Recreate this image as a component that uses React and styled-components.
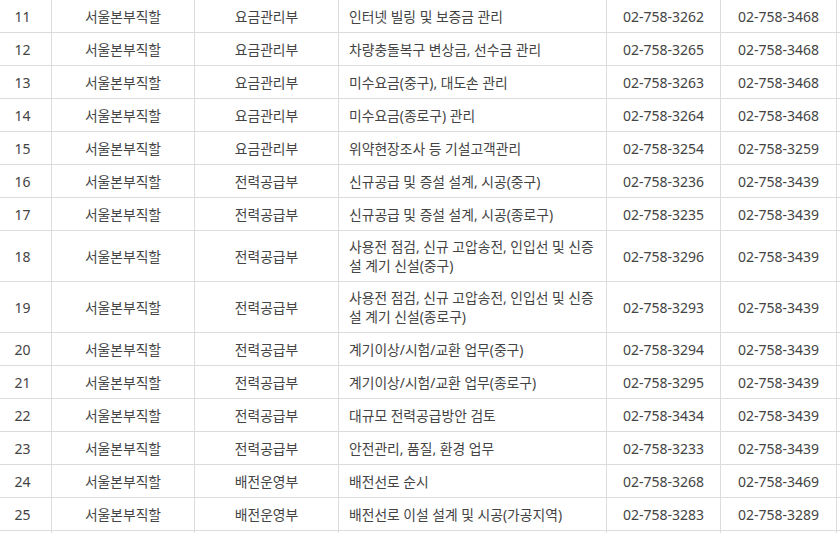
import React from "react";
import styled, { createGlobalStyle } from "styled-components";

const Global = createGlobalStyle`
  html, body { margin: 0; padding: 0; background: #fff; }
  body { overflow: hidden; }
`;

const Viewport = styled.div`
  width: 840px;
  height: 533px;
  overflow: hidden;
  background: #fff;
`;

const Table = styled.table`
  border-collapse: collapse;
  table-layout: fixed;
  width: 943px;
  margin: -1px 0 0 -7px;
  font-family: "Noto Sans", "Noto Sans CJK KR", sans-serif;
  color: #444;
`;

const Cell = styled.td`
  border: 1px solid #dcdcdc;
  height: 20px;
  padding: 6px 10px;
  line-height: 19px;
  font-size: ${(p) => (p.$digits ? "14px" : "13.8px")};
  text-align: ${(p) => (p.$left ? "left" : "center")};
  vertical-align: middle;
  word-break: break-all;
`;

const widths = [58, 143, 144, 268, 114, 116, 100];

const rows = [
  ["11", "요금관리부", "인터넷 빌링 및 보증금 관리", "3262", "3468"],
  ["12", "요금관리부", "차량충돌복구 변상금, 선수금 관리", "3265", "3468"],
  ["13", "요금관리부", "미수요금(중구), 대도손 관리", "3263", "3468"],
  ["14", "요금관리부", "미수요금(종로구) 관리", "3264", "3468"],
  ["15", "요금관리부", "위약현장조사 등 기설고객관리", "3254", "3259"],
  ["16", "전력공급부", "신규공급 및 증설 설계, 시공(중구)", "3236", "3439"],
  ["17", "전력공급부", "신규공급 및 증설 설계, 시공(종로구)", "3235", "3439"],
  ["18", "전력공급부", "사용전 점검, 신규 고압송전, 인입선 및 신증설 계기 신설(중구)", "3296", "3439"],
  ["19", "전력공급부", "사용전 점검, 신규 고압송전, 인입선 및 신증설 계기 신설(종로구)", "3293", "3439"],
  ["20", "전력공급부", "계기이상/시험/교환 업무(중구)", "3294", "3439"],
  ["21", "전력공급부", "계기이상/시험/교환 업무(종로구)", "3295", "3439"],
  ["22", "전력공급부", "대규모 전력공급방안 검토", "3434", "3439"],
  ["23", "전력공급부", "안전관리, 품질, 환경 업무", "3233", "3439"],
  ["24", "배전운영부", "배전선로 순시", "3268", "3469"],
  ["25", "배전운영부", "배전선로 이설 설계 및 시공(가공지역)", "3283", "3289"],
];

export default function App() {
  return (
    <Viewport>
      <Global />
      <Table>
        <colgroup>
          {widths.map((w, i) => (
            <col key={i} style={{ width: w }} />
          ))}
        </colgroup>
        <tbody>
          {rows.map(([no, dept, task, tel, fax]) => (
            <tr key={no}>
              <Cell $digits>{no}</Cell>
              <Cell>서울본부직할</Cell>
              <Cell>{dept}</Cell>
              <Cell $left>{task}</Cell>
              <Cell $digits>02-758-{tel}</Cell>
              <Cell $digits>02-758-{fax}</Cell>
              <Cell />
            </tr>
          ))}
          <tr>
            <Cell $digits />
            <Cell />
            <Cell />
            <Cell $left />
            <Cell $digits />
            <Cell $digits />
            <Cell />
          </tr>
        </tbody>
      </Table>
    </Viewport>
  );
}
